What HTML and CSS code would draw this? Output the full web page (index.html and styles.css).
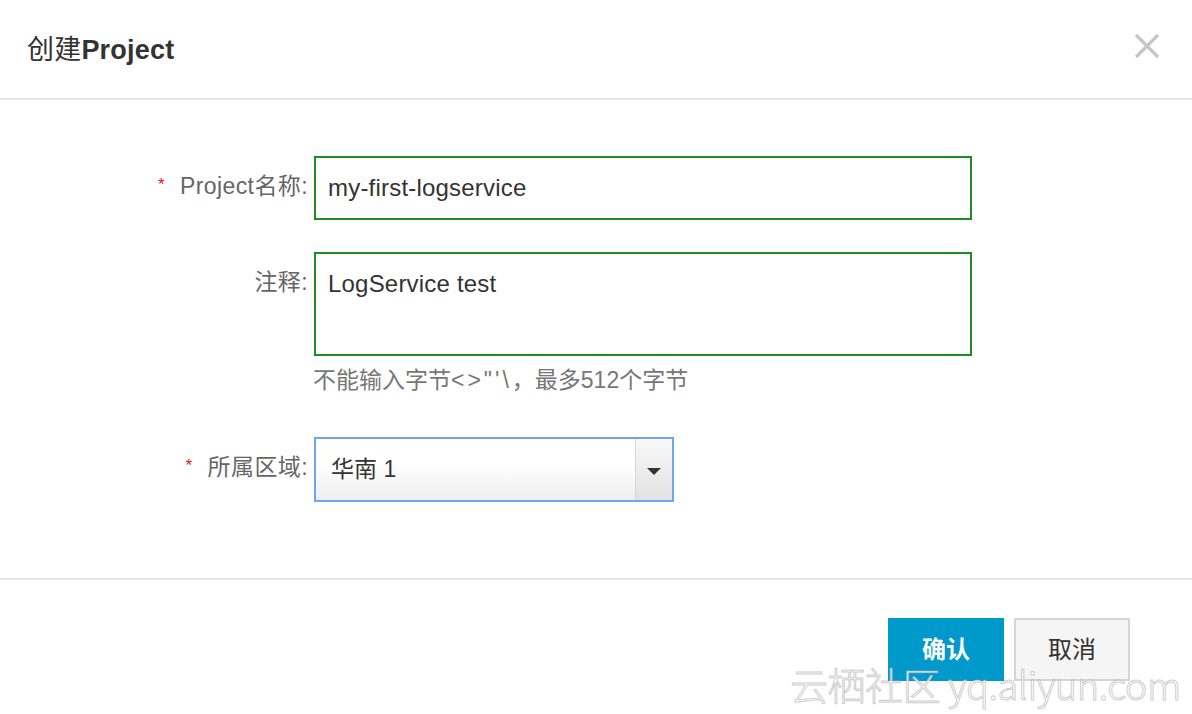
FILE: index.html
```html
<!DOCTYPE html>
<html lang="zh-CN">
<head>
<meta charset="utf-8">
<title>创建Project</title>
<link rel="stylesheet" href="styles.css">
</head>
<body>
<div class="dialog">
  <div class="header">
    <h1 class="title"><span class="cn">创建</span>Project</h1>
    <button class="close" aria-label="关闭">
      <svg width="26" height="26" viewBox="0 0 26 26"><path d="M2 2 L24 24 M24 2 L2 24" stroke="#c6c6c6" stroke-width="3.2" fill="none"/></svg>
    </button>
  </div>
  <div class="body">
    <div class="row">
      <label class="label"><span class="req">*</span>Project名称:</label>
      <div class="field input">my-first-logservice</div>
    </div>
    <div class="row row-gap">
      <label class="label">注释:</label>
      <div>
        <div class="field textarea">LogService test</div>
        <div class="hint">不能输入字节<span class="sym">&lt;&gt;"'\</span>，最多512个字节</div>
      </div>
    </div>
    <div class="row row-gap2">
      <label class="label"><span class="req">*</span>所属区域:</label>
      <div class="select">
        <span class="select-text">华南 1</span>
        <span class="select-arrow"><svg width="14" height="8" viewBox="0 0 14 8"><path d="M0 0 H14 L7 7 Z" fill="#333"/></svg></span>
      </div>
    </div>
  </div>
  <div class="footer">
    <button class="btn btn-primary">确认</button>
    <button class="btn btn-default">取消</button>
  </div>
  <div class="watermark">云栖社区 yq.aliyun.com</div>
</div>
</body>
</html>
```

FILE: styles.css
```css
* { box-sizing: border-box; }
html, body { margin: 0; padding: 0; background: #fff; }
body {
  font-family: "Liberation Sans", "Noto Sans CJK SC", sans-serif;
  color: #333;
}
.dialog {
  position: relative;
  width: 1192px;
  height: 714px;
  overflow: hidden;
}
.header {
  height: 100px;
  border-bottom: 2px solid #e5e5e5;
  display: flex;
  align-items: center;
  justify-content: space-between;
  padding: 0 32px 4px 27px;
}
.title {
  margin: 0;
  font-size: 27px;
  font-weight: bold;
  color: #333;
  letter-spacing: 0.2px;
}
.title .cn { font-weight: normal; }
.close {
  border: 0;
  background: none;
  padding: 0;
  width: 26px;
  height: 26px;
  display: flex;
  margin-top: -2px;
}
.body {
  padding: 56px 0 76px 0;
}
.row {
  display: grid;
  grid-template-columns: 314px 658px;
  align-items: start;
}
.row-gap { margin-top: 32px; }
.row-gap2 { margin-top: 43px; }
.label {
  text-align: right;
  padding-right: 6px;
  padding-top: 16px;
  line-height: 28px;
  font-size: 23px;
  letter-spacing: 0.4px;
  color: #666;
}
.req {
  color: #e4161a;
  font-size: 17px;
  margin-right: 15px;
  position: relative;
  top: -4px;
}
.field {
  border: 2px solid #1e8f1e;
  font-size: 24px;
  letter-spacing: 0.2px;
  color: #333;
  padding: 0 12px;
  line-height: 28px;
}
.input { height: 64px; padding-top: 16px; }
.textarea { height: 104px; padding-top: 16px; }
.hint {
  margin-top: 10px;
  font-size: 23px;
  line-height: 28px;
  color: #777;
  margin-left: -1px;
}
.hint .sym { letter-spacing: 3px; }
.select {
  width: 360px;
  height: 65px;
  border: 2px solid #6da6ec;
  display: flex;
  background: linear-gradient(#ffffff, #ffffff 40%, #eeeeee);
}
.select-text {
  flex: 1;
  padding-left: 15px;
  padding-top: 16px;
  line-height: 28px;
  font-size: 23px;
  color: #333;
}
.select-arrow {
  width: 37px;
  border-left: 1px solid #d6d6d6;
  display: flex;
  align-items: center;
  justify-content: center;
  padding-top: 4px;
  background: linear-gradient(#f8f8f8, #e2e2e2);
}
.footer {
  border-top: 2px solid #e5e5e5;
  display: flex;
  justify-content: flex-end;
  gap: 10px;
  padding: 38px 62px 0 0;
}
.btn {
  width: 116px;
  height: 63px;
  font-size: 24px;
  line-height: 30px;
  padding: 0 0 4px 0;
  font-family: "Noto Sans CJK SC", sans-serif;
  cursor: pointer;
}
.btn-primary {
  background: #0099cc;
  border: 0;
  color: #fff;
  font-weight: bold;
}
.btn-default {
  background: #f5f5f5;
  border: 2px solid #d5d5d5;
  color: #333;
}
.watermark {
  position: absolute;
  left: 790px;
  top: 662px;
  font-size: 38px;
  line-height: 44px;
  font-family: "Noto Sans CJK SC", sans-serif;
  font-weight: 300;
  color: rgba(255,255,255,0.85);
  -webkit-text-stroke: 1px rgba(170,170,170,0.6);
  white-space: nowrap;
  letter-spacing: -0.5px;
  pointer-events: none;
}
```
